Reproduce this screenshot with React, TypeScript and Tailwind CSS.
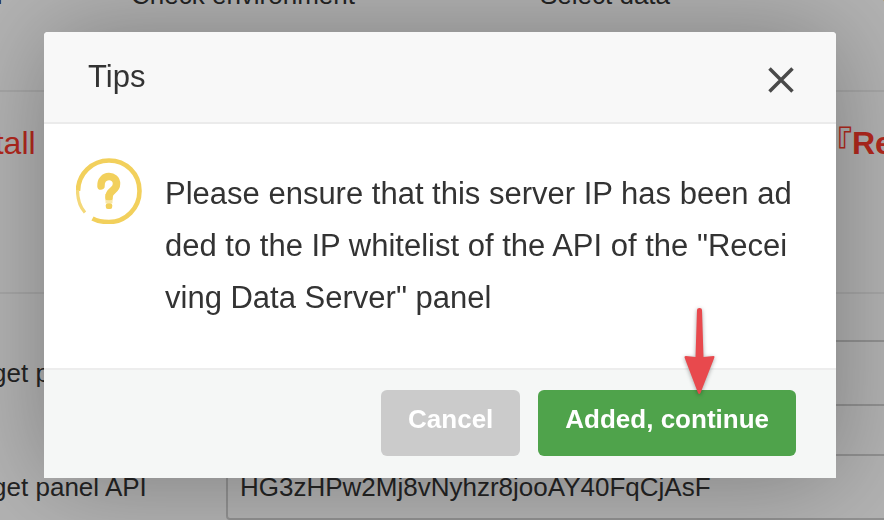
// Migration wizard page with the IP whitelist confirmation dialog on top of it.

import React, { useState } from "react";

const STEPS = [
  "Migration information",
  "Check environment",
  "Select data",
  "Start migration",
];

function QuestionIcon() {
  return (
    <svg viewBox="0 0 66 66" className="h-[66px] w-[66px] shrink-0" fill="none" aria-hidden="true">
      <path
        d="M16.500 60.500 C21 63 27 64 33 64 C50 64 63.500 50 63.500 33 C63.500 15.500 50 2.500 33 2.500 C16 2.500 2 16 2 33"
        stroke="#f2d05c"
        strokeWidth="4.600"
      />
      <path d="M1.500 32 C1.500 42 4 49 9 54.500" stroke="#f4d879" strokeWidth="3.200" />
      <path
        d="M25 28 C24.500 15.500 41 16 40.500 26 C40.500 33 33 32 33 39"
        stroke="#f2d05c"
        strokeWidth="7.500"
        strokeLinecap="round"
      />
      <path d="M33 36 V42.500" stroke="#f2d05c" strokeWidth="7" />
      <path d="M29.500 43.800 H36.500" stroke="#f8e6a8" strokeWidth="3" />
      <rect x="29.800" y="45.300" width="6.400" height="5.600" rx="2" fill="#f2d05c" />
    </svg>
  );
}

function PointerArrow() {
  return (
    <svg
      viewBox="0 0 36 92"
      className="pointer-events-none absolute right-[119px] bottom-20 h-[92px] w-9 drop-shadow-[0_1px_2px_rgba(0,0,0,0.35)]"
      aria-hidden="true"
    >
      <path
        d="M16 4 Q16 2 18.500 2 Q21 2 21 4 L22.500 51 L32.500 50 Q34 50 33.200 52 L19.500 87 Q18.200 89 17 87 L3.700 52 Q3 50 5 50 L14.500 51 Z"
        fill="#e8494d"
      />
    </svg>
  );
}

function TipsDialog({ onClose }: { onClose: () => void }) {
  return (
    <div className="fixed inset-0 bg-black/30 pt-8 pr-12 pl-11">
      <div
        role="dialog"
        aria-labelledby="tips-title"
        className="relative rounded-t bg-white text-[#333] shadow-[2px_2px_100px_rgba(0,0,0,0.3)]"
      >
        <header className="flex items-center justify-between rounded-t border-b-2 border-[#ebebeb] bg-[#f8f8f8] pr-10 pl-11">
          <h2 id="tips-title" className="text-[31px] leading-[90px]">
            Tips
          </h2>
          <button type="button" aria-label="Close" onClick={onClose} className="pt-1.5">
            <svg viewBox="0 0 30 30" className="h-[30px] w-[30px]" aria-hidden="true">
              <path d="M3.500 3.500 L26.500 26.500 M26.500 3.500 L3.500 26.500" stroke="#4a4a4a" strokeWidth="3.500" />
            </svg>
          </button>
        </header>

        <div className="flex gap-[23px] pt-[34px] pr-11 pb-11 pl-8">
          <QuestionIcon />
          <p className="pt-2.5 text-[31px] leading-[52px] break-all">
            Please ensure that this server IP has been added to the IP whitelist
            of the API of the "Receiving Data Server" panel
          </p>
        </div>

        <footer className="flex justify-end gap-[18px] border-t-2 border-[#ededed] bg-[#f5f7f6] px-10 pt-5 pb-[22px] text-[26px] font-bold text-white">
          <button type="button" onClick={onClose} className="h-[66px] rounded-md bg-[#cbcbcb] px-[27px] pb-2">
            Cancel
          </button>
          <button type="button" onClick={onClose} className="h-[66px] rounded-md bg-[#4fa34b] px-[27px] pb-2">
            Added, continue
          </button>
        </footer>

        <PointerArrow />
      </div>
    </div>
  );
}

export default function App() {
  const [open, setOpen] = useState(true);
  const [address, setAddress] = useState("");
  const [apiKey, setApiKey] = useState("HG3zHPw2Mj8vNyhzr8jooAY40FqCjAsF");

  return (
    <main className="h-screen overflow-hidden bg-white font-['Liberation_Sans','Noto_Sans_CJK_SC',sans-serif] text-[26px] text-[#333]">
      {/* wizard steps, scrolled partly out of view */}
      <ol className="-mt-5 -ml-[300px] flex h-28 border-b-2 border-[#eee] leading-[30px]">
        {STEPS.map((step) => (
          <li key={step} className="w-[362px] shrink-0 text-center whitespace-nowrap">
            {step}
          </li>
        ))}
      </ol>

      <div className="-ml-12 flex h-[202px] border-b-2 border-[#eee] pt-6 text-[32px] leading-[54px] whitespace-nowrap text-[#ff3a2b]">
        <span className="w-[868px] shrink-0">Install</span>
        <strong>『Receiving Data Server』</strong>
      </div>

      <form className="-ml-11 flex flex-col gap-12 pt-[46px]">
        <div className="flex items-center">
          <label htmlFor="address" className="w-[270px] shrink-0">
            Target panel
          </label>
          <input
            id="address"
            value={address}
            onChange={(e) => setAddress(e.target.value)}
            className="-mr-4 h-[66px] flex-1 rounded border-2 border-[#d0d0d0] px-3"
          />
        </div>
        <div className="flex items-center">
          <label htmlFor="api-key" className="w-[270px] shrink-0">
            Target panel API
          </label>
          <input
            id="api-key"
            value={apiKey}
            onChange={(e) => setApiKey(e.target.value)}
            className="-mr-4 h-[66px] flex-1 rounded border-2 border-[#d0d0d0] px-3"
          />
        </div>
      </form>

      {open && <TipsDialog onClose={() => setOpen(false)} />}
    </main>
  );
}
